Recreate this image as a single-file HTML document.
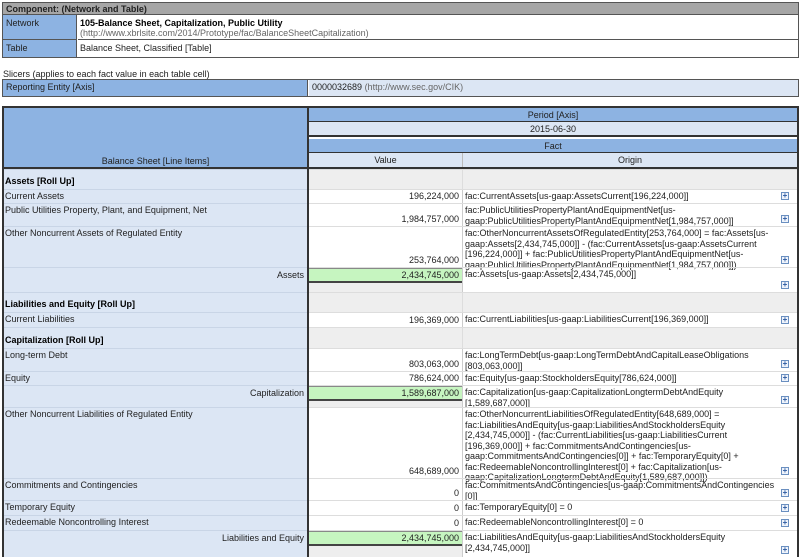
<!DOCTYPE html>
<html><head><meta charset="utf-8"><style>
*{margin:0;padding:0;box-sizing:border-box}
body{width:800px;height:557px;background:#fff;font-family:"Liberation Sans",Verdana,sans-serif;font-size:9px;color:#222;position:relative;overflow:hidden}
.a{position:absolute}
.hb{background:#8db3e2}
.lb{background:#dce6f4}
.t{line-height:10.5px}
.pl{position:absolute;width:8px;height:8px;border:1px solid #6a8fc0;background:#eef3fb;font-size:8px;line-height:6px;text-align:center;color:#2a58a0;font-weight:bold}
</style></head><body>
<!-- Component -->
<div class="a" style="left:2px;top:2px;width:797px;height:56px;border:1px solid #555;"></div>
<div class="a" style="left:3px;top:3px;width:795px;height:12px;background:#a6a6a6;font-weight:bold;padding-left:3px;line-height:12px;border-bottom:1px solid #555">Component: (Network and Table)</div>
<div class="a hb" style="left:3px;top:15px;width:74px;height:25px;padding:3px;border-right:1px solid #555;border-bottom:1px solid #555">Network</div>
<div class="a" style="left:78px;top:15px;width:720px;height:25px;padding:3px 2px;border-bottom:1px solid #555;line-height:10px"><b style="color:#000">105-Balance Sheet, Capitalization, Public Utility</b><br><span style="color:#666">(http://www.xbrlsite.com/2014/Prototype/fac/BalanceSheetCapitalization)</span></div>
<div class="a hb" style="left:3px;top:40px;width:74px;height:17px;padding:3px;border-right:1px solid #555">Table</div>
<div class="a" style="left:80px;top:40px;height:17px;padding-top:3px">Balance Sheet, Classified [Table]</div>
<!-- Slicers -->
<div class="a" style="left:3px;top:69px">Slicers (applies to each fact value in each table cell)</div>
<div class="a" style="left:2px;top:79px;width:797px;height:18px;border:1px solid #555"></div>
<div class="a hb" style="left:3px;top:80px;width:305px;height:16px;padding:2px 3px;border-right:1px solid #555">Reporting Entity [Axis]</div>
<div class="a lb" style="left:309px;top:80px;width:489px;height:16px;padding:2px 3px">0000032689 <span style="color:#666">(http://www.sec.gov/CIK)</span></div>
<!-- main table -->
<div class="a" style="left:2px;top:106px;width:797px;height:451px;border:2px solid #333;border-bottom:none"></div>
<div class="a hb" style="left:4px;top:108px;width:303px;height:60px;text-align:center;padding-top:48px">Balance Sheet [Line Items]</div>
<div class="a" style="left:307px;top:108px;width:2px;height:449px;background:#333"></div>
<div class="a hb" style="left:309px;top:108px;width:488px;height:14px;text-align:center;line-height:14px;border-bottom:1px solid #333">Period [Axis]</div>
<div class="a lb" style="left:309px;top:122px;width:488px;height:15px;text-align:center;line-height:15px;border-bottom:2px solid #333">2015-06-30</div>
<div class="a hb" style="left:309px;top:139px;width:488px;height:14px;text-align:center;line-height:14px;border-bottom:1px solid #333">Fact</div>
<div class="a lb" style="left:309px;top:153px;width:154px;height:15px;text-align:center;line-height:15px;border-right:1px solid #bbb">Value</div>
<div class="a lb" style="left:463px;top:153px;width:334px;height:15px;text-align:center;line-height:15px">Origin</div>
<div class="a" style="left:4px;top:167px;width:793px;height:2px;background:#333"></div>
<div class="a lb" style="left:4px;top:169px;width:303px;height:388px"></div>
<div class="a" style="left:462px;top:169px;width:1px;height:388px;background:#ccc"></div>

<!-- rows -->
<div id="rows"></div>
<script>
var R=[
[169,20,'Assets [Roll Up]','r'],
[189,14,'Current Assets','','196,224,000','','fac:CurrentAssets[us-gaap:AssetsCurrent[196,224,000]]'],
[203,23,'Public Utilities Property, Plant, and Equipment, Net','','1,984,757,000','','fac:PublicUtilitiesPropertyPlantAndEquipmentNet[us-<br>gaap:PublicUtilitiesPropertyPlantAndEquipmentNet[1,984,757,000]]'],
[226,41,'Other Noncurrent Assets of Regulated Entity','','253,764,000','','fac:OtherNoncurrentAssetsOfRegulatedEntity[253,764,000] = fac:Assets[us-<br>gaap:Assets[2,434,745,000]] - (fac:CurrentAssets[us-gaap:AssetsCurrent<br>[196,224,000]] + fac:PublicUtilitiesPropertyPlantAndEquipmentNet[us-<br>gaap:PublicUtilitiesPropertyPlantAndEquipmentNet[1,984,757,000]])'],
[267,25,'Assets','g','2,434,745,000','g','fac:Assets[us-gaap:Assets[2,434,745,000]]'],
[292,20,'Liabilities and Equity [Roll Up]','r'],
[312,15,'Current Liabilities','','196,369,000','','fac:CurrentLiabilities[us-gaap:LiabilitiesCurrent[196,369,000]]'],
[327,21,'Capitalization [Roll Up]','r'],
[348,23,'Long-term Debt','','803,063,000','','fac:LongTermDebt[us-gaap:LongTermDebtAndCapitalLeaseObligations<br>[803,063,000]]'],
[371,14,'Equity','','786,624,000','','fac:Equity[us-gaap:StockholdersEquity[786,624,000]]'],
[385,22,'Capitalization','g','1,589,687,000','g','fac:Capitalization[us-gaap:CapitalizationLongtermDebtAndEquity<br>[1,589,687,000]]'],
[407,71,'Other Noncurrent Liabilities of Regulated Entity','','648,689,000','','fac:OtherNoncurrentLiabilitiesOfRegulatedEntity[648,689,000] =<br>fac:LiabilitiesAndEquity[us-gaap:LiabilitiesAndStockholdersEquity<br>[2,434,745,000]] - (fac:CurrentLiabilities[us-gaap:LiabilitiesCurrent<br>[196,369,000]] + fac:CommitmentsAndContingencies[us-<br>gaap:CommitmentsAndContingencies[0]] + fac:TemporaryEquity[0] +<br>fac:RedeemableNoncontrollingInterest[0] + fac:Capitalization[us-<br>gaap:CapitalizationLongtermDebtAndEquity[1,589,687,000]])'],
[478,22,'Commitments and Contingencies','','0','','fac:CommitmentsAndContingencies[us-gaap:CommitmentsAndContingencies<br>[0]]'],
[500,15,'Temporary Equity','','0','','fac:TemporaryEquity[0] = 0'],
[515,15,'Redeemable Noncontrolling Interest','','0','','fac:RedeemableNoncontrollingInterest[0] = 0'],
[530,27,'Liabilities and Equity','g','2,434,745,000','g','fac:LiabilitiesAndEquity[us-gaap:LiabilitiesAndStockholdersEquity<br>[2,434,745,000]]']
];
var h='';
R.forEach(function(r){
 var y=r[0],H=r[1];
 h+='<div class="a" style="left:4px;top:'+y+'px;width:303px;height:1px;background:#c9d5e6"></div>';
 var st=r[3]=='r'?'font-weight:bold;color:#000;padding-top:'+(H-13)+'px;':(r[3]=='g'?'text-align:right;padding-top:3px;padding-right:2px;':'padding-top:2px;');
 h+='<div class="a t" style="left:5px;top:'+y+'px;width:301px;height:'+H+'px;'+st+'">'+r[2]+'</div>';
 if(r[3]=='r'){
  h+='<div class="a" style="left:309px;top:'+y+'px;width:488px;height:'+H+'px;background:#eeeeee;border-top:1px solid #ddd"></div>';
  h+='<div class="a" style="left:462px;top:'+y+'px;width:1px;height:'+H+'px;background:#ddd"></div>';
 } else {
  h+='<div class="a" style="left:309px;top:'+y+'px;width:488px;height:1px;background:#ddd"></div>';
  if(r[5]=='g'){
   h+='<div class="a" style="left:309px;top:'+(y+1)+'px;width:153px;height:'+(H-1)+'px;background:#eeeeee"></div>';
   h+='<div class="a" style="left:309px;top:'+(y+1)+'px;width:153px;height:15px;background:#c6f5c0;border-bottom:2px solid #444;border-top:1px solid #888;text-align:right;padding-right:3px;line-height:13px">'+r[4]+'</div>';
  } else {
   h+='<div class="a t" style="left:309px;top:'+y+'px;width:153px;height:'+H+'px;text-align:right;padding-right:3px;padding-top:'+(H-12)+'px">'+r[4]+'</div>';
  }
  h+='<div class="a t" style="left:465px;top:'+(y+2)+'px;width:318px">'+r[6]+'</div>';
  h+='<div class="pl" style="left:781px;top:'+(y+H-11)+'px">+</div>';
 }
});
document.getElementById('rows').innerHTML=h;
</script>
</body></html>
